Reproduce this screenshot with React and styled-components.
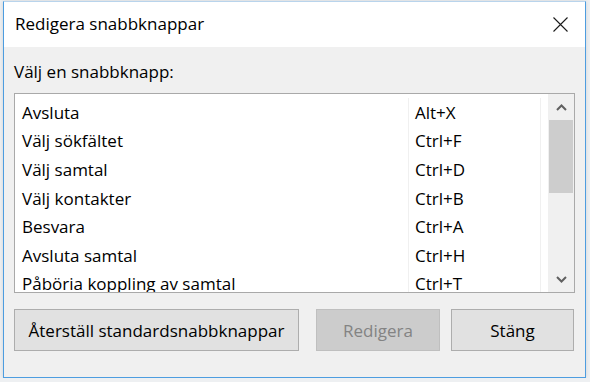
import React from 'react'
import styled, { createGlobalStyle } from 'styled-components'

const GlobalStyle = createGlobalStyle`
  body {
    margin: 0;
    background: #eef0f2;
    font-family: "Open Sans", "Noto Sans", sans-serif;
  }
`

const shortcuts = [
  ['Avsluta', 'Alt+X'],
  ['Välj sökfältet', 'Ctrl+F'],
  ['Välj samtal', 'Ctrl+D'],
  ['Välj kontakter', 'Ctrl+B'],
  ['Besvara', 'Ctrl+A'],
  ['Avsluta samtal', 'Ctrl+H'],
  ['Påböria koppling av samtal', 'Ctrl+T'],
]

export default function App() {
  return (
    <Page>
      <GlobalStyle />
      <Window>
        <TitleBar>
          <Title>Redigera snabbknappar</Title>
          <CloseButton aria-label="Stäng">
            <svg width="15" height="15" viewBox="0 0 15 15">
              <path d="M0.5 0.5 L14.5 14.5 M14.5 0.5 L0.5 14.5" stroke="#1a1a1a" strokeWidth="1.1" fill="none" />
            </svg>
          </CloseButton>
        </TitleBar>
        <Body>
          <Label>Välj en snabbknapp:</Label>
          <ListBox>
            <Rows>
              {shortcuts.map(([name, keys]) => (
                <Row key={name}>
                  <NameCell>{name}</NameCell>
                  <KeyCell>{keys}</KeyCell>
                  <EmptyCell />
                </Row>
              ))}
            </Rows>
            <ScrollBar>
              <Arrow>
                <svg width="11" height="7" viewBox="0 0 11 7">
                  <path d="M1 6 L5.5 1.5 L10 6" stroke="#606060" strokeWidth="2" fill="none" />
                </svg>
              </Arrow>
              <Track>
                <Thumb />
              </Track>
              <Arrow>
                <svg width="11" height="7" viewBox="0 0 11 7">
                  <path d="M1 1 L5.5 5.5 L10 1" stroke="#606060" strokeWidth="2" fill="none" />
                </svg>
              </Arrow>
            </ScrollBar>
          </ListBox>
          <Buttons>
            <Button $width={285}>Återställ standardsnabbknappar</Button>
            <Button $width={124} disabled>Redigera</Button>
            <Button $width={123}>Stäng</Button>
          </Buttons>
        </Body>
      </Window>
    </Page>
  )
}

const Page = styled.div`
  padding: 1px 0 0 3px;
`

const Window = styled.div`
  width: 581px;
  height: 375px;
  border: 1px solid #4d9de0;
  border-top-color: #b9d4ec;
  background: #f0f0f0;
  display: flex;
  flex-direction: column;
  box-shadow: 0 0 4px rgba(0, 0, 0, 0.12);
`

const TitleBar = styled.div`
  height: 45px;
  background: #ffffff;
  display: flex;
  align-items: center;
  justify-content: space-between;
  padding: 0 17px 0 11px;
`

const Title = styled.div`
  font-size: 17px;
  color: #000;
  margin-top: -2px;
`

const CloseButton = styled.div`
  display: flex;
`

const Body = styled.div`
  flex: 1;
  padding: 0 10px;
  display: flex;
  flex-direction: column;
`

const Label = styled.div`
  font-size: 17px;
  line-height: 20px;
  margin-top: 15px;
  color: #000;
`

const ListBox = styled.div`
  margin-top: 11px;
  height: 198px;
  border: 1px solid #a9a9a9;
  background: #fff;
  display: flex;
  overflow: hidden;
`

const Rows = styled.div`
  flex: 1;
  padding-top: 4px;
  display: flex;
  flex-direction: column;
`

const Row = styled.div`
  height: 28.6px;
  flex-shrink: 0;
  display: grid;
  grid-template-columns: 394px 132px 1fr;
  align-items: center;
  font-size: 17px;
  color: #000;
  white-space: nowrap;
`

const NameCell = styled.div`
  padding-left: 7px;
  height: 100%;
  display: flex;
  align-items: center;
  border-right: 1px solid #f0f0f0;
`

const KeyCell = styled.div`
  padding-left: 6px;
  height: 100%;
  display: flex;
  align-items: center;
  border-right: 1px solid #f0f0f0;
`

const EmptyCell = styled.div``

const ScrollBar = styled.div`
  width: 26px;
  display: flex;
  flex-direction: column;
  background: #f0f0f0;
`

const Arrow = styled.div`
  height: 26px;
  display: flex;
  align-items: center;
  justify-content: center;
`

const Track = styled.div`
  flex: 1;
  padding: 0 1px;
`

const Thumb = styled.div`
  height: 73px;
  background: #cdcdcd;
`

const Buttons = styled.div`
  margin-top: 16px;
  display: flex;
  gap: 17px;

  & > :last-child {
    margin-left: -6px;
  }
`

const Button = styled.button`
  width: ${(p) => p.$width}px;
  height: 42px;
  font-family: "Open Sans", "Noto Sans", sans-serif;
  font-size: 17px;
  color: #000;
  background: #e1e1e1;
  border: 1px solid #adadad;
  padding: 0;

  &:disabled {
    background: #cccccc;
    border-color: #bfbfbf;
    color: #838383;
  }
`
